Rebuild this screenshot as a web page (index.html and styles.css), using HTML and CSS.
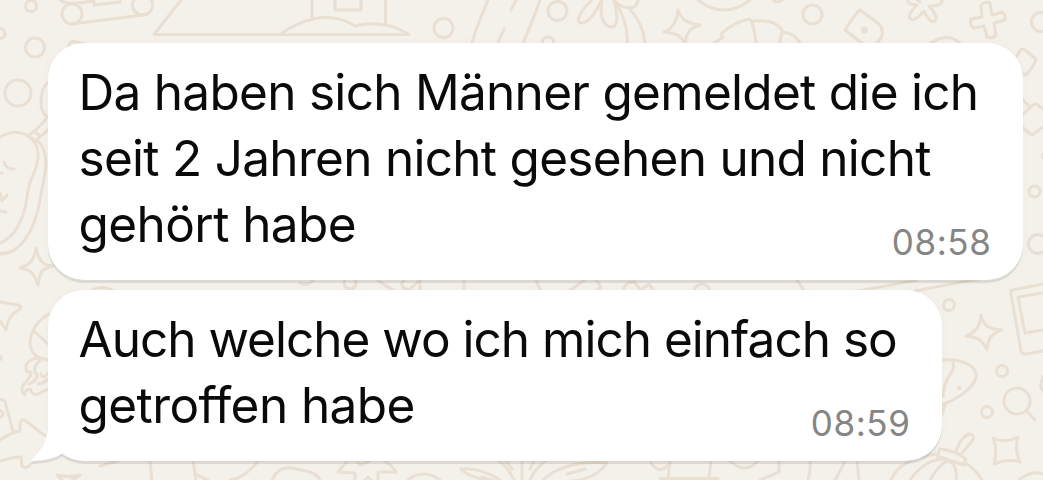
FILE: index.html
```
<!DOCTYPE html>
<html lang="de">
<head>
    <meta charset="UTF-8">
    <meta name="viewport" content="width=device-width, initial-scale=1.0">
    <title>Chat</title>
    <link rel="stylesheet" href="styles.css">
</head>
<body>
    <svg class="wallpaper" viewBox="0 0 1043 480" aria-hidden="true">
        <!-- top edge -->
        <circle cx="31" cy="6" r="5.5"/><circle cx="0" cy="33.500" r="5"/><circle cx="35" cy="47.500" r="9.500"/>
        <circle cx="72" cy="14" r="10"/><circle cx="142.500" cy="5" r="10"/>
        <path d="M72 24L143 15M60 0Q68 5 78 3L94 1M94 0V5L120 2V0M69 46Q69 40 77 42L85 44"/>
        <path d="M181 0L154 34.500H409Q384 19 355 26Q323 6 282 33M312 0V19M335 0V10H361V0M385.500 0V24"/>
        <circle cx="443.500" cy="28" r="9.500"/><circle cx="557.500" cy="11" r="9.500"/><circle cx="548" cy="43" r="6"/>
        <path d="M488 0Q475 31 472 43M504 29L498 43M516 0L511 10M540 0Q535 15 523 43"/>
        <path d="M592 0C582 9 574 22 581 23C590 24 597 8 602 0C599 15 603 27 612 27C619 26 617 10 614 0C624 15 628 30 627 43M615 1C622 9 637 12 638 0M629 8C640 20 644 32 645 43"/>
        <path d="M678 10C682 20 686 23 700 25C690 28 686 32 685 45C682 35 675 33 664 32C672 29 677 22 678 10Z"/>
        <path d="M698 0Q724 20 750 0M773 0Q778 4 782 0M714 43L723 37L721 34Q735 21 750 19Q754 25 756 43M753 21Q775 19 782 30L780 43M782 32Q795 33 800 43"/>
        <circle cx="812.500" cy="14.500" r="9.500"/>
        <path d="M860 10L879 24Q887 34 876 44M860 10Q857 11 845 30L863 44"/>
        <circle class="dot" cx="864.500" cy="30" r="3.500"/>
        <path d="M908 0Q907 5 917 5Q906 16 911 19Q915 22 924 11Q930 24 935 21Q939 17 929 6Q943 6 942 0M917 0L920 2"/>
        <path d="M981 5Q985 1 990 3L992 15L1002 12Q1006 14 1005 20L994 23L996 35Q994 39 987 37L984 26L974 28Q969 26 971 19L982 17Z"/>
        <circle cx="1041" cy="22" r="9.500"/><path d="M931 43Q948 32 960 43"/>

        <!-- right edge -->
        <path d="M1017 56L1020 51Q1022 48 1025 50L1036 59Q1036 62 1028 73Q1025 77 1021 72M1022 99L1030 107M1022 115L1032 106Q1035 102 1039 106L1043 109M1022 127L1029 133Q1032 136 1035 133L1043 127"/>
        <circle cx="1034.500" cy="191.500" r="5.500"/><circle cx="1038" cy="244" r="9.500"/><circle cx="1049" cy="156" r="6"/>
        <circle cx="949" cy="305" r="5.500"/><circle cx="1002" cy="371" r="5.500"/><circle cx="987" cy="412" r="5.500"/>
        <path d="M981 315C984 326 988 329 1002 330C991 334 988 338 987 350C982 339 977 337 966 336C976 332 980 326 981 315Z"/>
        <path d="M1043 284L1013 290Q1010 290 1011 294L1021 351Q1022 355 1026 354L1043 351M1043 293L1018 297L1025 333L1043 330"/>
        <path d="M942 360C965 358 978 368 976 378C972 390 955 400 942 405M952 361C959 371 943 375 943 396M941 417L945 405M1043 377Q1040 384 1041 388L1043 391"/>
        <circle class="dot" cx="959" cy="388" r="2.200"/>
        <circle cx="1017" cy="401" r="13"/><path d="M1027 411L1035 420"/>
        <path d="M993 438Q1005 444 1018 437Q1014 450 1020 462Q1008 458 994 464Q998 450 993 438Z"/>
        <path d="M956 451Q961 437 969 434Q976 435 972 441L962 453M940 449Q954 450 966 459L964 465L937 456Z"/>
        <path d="M891 480Q900 458 938 454M910 480Q925 459 944 459M930 480Q940 463 948 461Q958 464 956 480M964 462Q975 468 982 480M1019 480Q1032 470 1043 474"/>

        <!-- left edge -->
        <circle cx="18" cy="93" r="13"/>
        <path d="M49 82Q41 86 41 104Q41 111 47 117M46 119L33 133M50 128L40 137M34 131L28 136L36 141L40 136Z"/>
        <path d="M0 137C20 125 40 138 38 158C36 177 29 175 27 197C24 222 13 238 0 243M37 140C53 155 43 180 40 200C34 235 18 254 0 254M4 162Q6 170 14 169M0 173H2M0 193L2 201L7 195M0 211L6 212"/>
        <path d="M36 248C39 260 41 265 53 266C41 269 40 272 38 285C34 273 31 270 20 268C31 264 34 260 36 248Z"/>
        <path d="M0 302L18 305Q24 307 17 311Q8 316 6 330L0 321M0 253Q6 254 12 251"/>
        <path d="M49 314Q30 325 30 345Q32 355 40 358L48 360M34 331L48 344"/>
        <path d="M40 359C32 357 25 362 26 369Q27 373 31 372C32 380 21 382 22 390Q23 395 25 395Q25 388 31 390Q32 396 38 394L48 389M40 361C34 365 33 370 37 375Q38 380 29 384M38 384Q45 383 48 379M48 373Q43 380 41 374"/>
        <circle class="dot" cx="0" cy="358" r="3"/><circle cx="0" cy="414" r="3"/>
        <path d="M0 400Q4 399 5 402L13 431M0 440Q10 433 20 431V423Q22 418 26 421L45 436M0 461Q12 457 21 457L22 466Q26 470 31 464M57 475Q70 478 80 475L72 480M57 475L62 480"/>

        <!-- strip between the bubbles -->
        <circle cx="350" cy="283" r="6"/><circle cx="702" cy="292" r="8"/>
        <path d="M92 290Q102 285 112 290M300 283Q309 287 314 279M377 280L396 292M404 280Q398 287 409 290L420 280V290M464 280V292M536 280L541 292M568 292L586 279M596 280L601 287L594 293M624 292Q623 282 634 282L641 290L649 284L655 292M797 280L805 292M854 292L917 280M915 291L978 279"/>

        <!-- bottom edge -->
        <path d="M100 466L118 461M150 461L152 480M193 461L196 480M197 475L208 480M258 461Q245 478 230 480M272 480Q278 466 292 468L310 472Q318 475 320 480"/>
        <path d="M347 461L338 472L355 473V480M378 480V472H396Q392 465 384 461M357 461L360 465L370 461M365 480L368 477L371 480M408 480Q423 468 440 480"/>
        <path d="M485 480Q465 475 461 469Q480 467 500 480M482 477L494 481M499 461Q508 467 514 480M522 461V480M506 461L512 469M534 461L530 469M545 461Q534 470 530 480"/>
        <path d="M543 480Q565 460 607 463Q595 480 570 481M567 474L585 469M651 463Q660 475 668 465M670 461L668 478M711 461L709 478M660 478.500H718M730 461Q745 475 758 461M779 461V472L760 480M810 461Q811 470 808 480M845 461Q840 472 835 480M857 461L859 480"/>
    </svg>

    <main class="chat">
        <div class="bubble bubble-wide">
            <p class="text">
                <span class="line">Da haben sich Männer gemeldet die ich</span>
                <span class="line">seit 2 Jahren nicht gesehen und nicht</span>
                <span class="line line-short">gehört habe</span>
            </p>
            <time class="time">08:58</time>
        </div>
        <div class="bubble bubble-last">
            <p class="text">
                <span class="line line-tight">Auch welche wo ich mich einfach so</span>
                <span class="line line-short">getroffen habe</span>
            </p>
            <time class="time">08:59</time>
            <svg class="tail" viewBox="0 0 32 38" aria-hidden="true">
                <path d="M17 0C17 14 10 26 1 33Q-1 35 3 35Q21 34 31 28V18L22 0Z"/>
            </svg>
        </div>
    </main>
</body>
</html>
```
FILE: styles.css
```
* {
    box-sizing: border-box;
}
body {
    margin: 0;
    height: 480px;
    overflow: hidden;
    background-color: #f4f1ea;
    color: #0a0a0a;
    font-family: Inter, "Liberation Sans", sans-serif;
}
.wallpaper {
    position: absolute;
    top: 0;
    left: 0;
    width: 1043px;
    height: 480px;
    fill: none;
    stroke: #eadfd3;
    stroke-width: 3;
    stroke-linecap: round;
    stroke-linejoin: round;
}
.wallpaper .dot {
    fill: #eadfd3;
    stroke: none;
}
.chat {
    position: relative;
    display: flex;
    flex-direction: column;
    align-items: flex-start;
    gap: 10px;
    padding: 43px 0 0 48px;
}
.bubble {
    position: relative;
    display: flex;
    justify-content: space-between;
    align-items: flex-end;
    padding: 16px 31.5px 20px 30.5px;
    background-color: #fff;
    border-radius: 36px;
    box-shadow: 0 3px 0 rgba(0, 0, 0, 0.09), 0 0 8px rgba(0, 0, 0, 0.03);
}
.bubble-wide {
    width: 975px;
    height: 237px;
}
.bubble-last {
    width: 894px;
    height: 171px;
}
.text {
    align-self: flex-start;
    width: 0;
    margin: 0;
    font-size: 49.5px;
    line-height: 66px;
    letter-spacing: -0.71px;
    white-space: nowrap;
}
.line {
    display: block;
}
.line-short {
    letter-spacing: -0.58px;
}
.line-tight {
    letter-spacing: -0.99px;
}
.time {
    color: #858585;
    font-size: 35px;
    line-height: 36px;
    letter-spacing: 0.6px;
}
.tail {
    position: absolute;
    left: -17px;
    bottom: -3px;
    width: 32px;
    height: 38px;
    fill: #fff;
    filter: drop-shadow(0 3px 0 rgba(0, 0, 0, 0.09));
}
```
